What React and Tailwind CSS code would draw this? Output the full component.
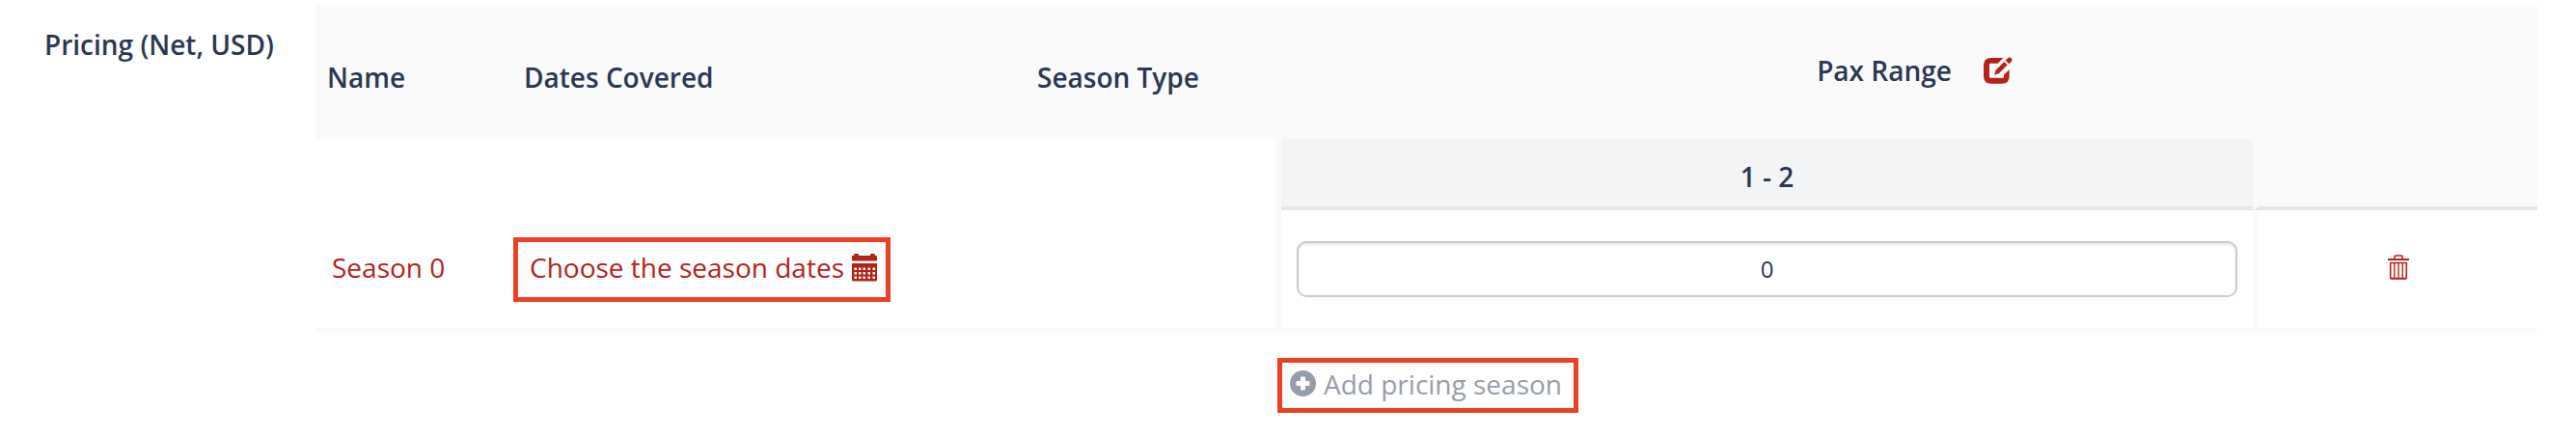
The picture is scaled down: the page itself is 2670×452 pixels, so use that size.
const headers = ['Name', 'Dates Covered', 'Season Type'];

function EditIcon() {
    return (
        <svg viewBox="54 24 96 90" className="h-[30px] w-8" fill="currentColor" aria-hidden="true">
            <path d="M118 30H80Q57 30 57 53V87Q57 110 80 110H114Q137 110 137 87V66L120 83V89Q120 92 117 92H78Q75 92 75 89V50Q75 47 78 47H101Z" />
            <path d="M90 83L95 68L121 42L131 52L105 78Z" />
            <path d="M125 38L131 32Q137 26 143 31Q149 37 142 43L136 49Z" />
        </svg>
    );
}

function CalendarIcon() {
    return (
        <svg viewBox="0 0 27 29" className="h-[29px] w-[27px]" fill="currentColor" aria-hidden="true">
            <path d="M0 3Q0 2 1 2H2V1Q2 0 3 0H6Q7 0 7 1V2H19V1Q19 0 20 0H23Q24 0 24 1V2H25Q26 2 26 3V7.500H0Z" />
            <path
                fillRule="evenodd"
                d="M0 10H26V27Q26 28.500 24.500 28.500H1.500Q0 28.500 0 27ZM2.500 14.500v2.500h2.500v-2.500zM7 14.500v2.500h2.500v-2.500zM11.500 14.500v2.500h2.500v-2.500zM16.500 14.500v2.500h2.500v-2.500zM21.500 14.500v2.500h2.500v-2.500zM2.500 19v2.500h2.500v-2.500zM7 19v2.500h2.500v-2.500zM11.500 19v2.500h2.500v-2.500zM16.500 19v2.500h2.500v-2.500zM21.500 19v2.500h2.500v-2.500zM2.500 23.500v2.500h2.500v-2.500zM7 23.500v2.500h2.500v-2.500zM11.500 23.500v2.500h2.500v-2.500zM16.500 23.500v2.500h2.500v-2.500zM21.500 23.500v2.500h2.500v-2.500z"
            />
        </svg>
    );
}

function TrashIcon() {
    return (
        <svg viewBox="0 0 22 26" className="h-[26px] w-[22px]" fill="none" stroke="currentColor" strokeWidth="1.4" aria-hidden="true">
            <path d="M0 5H22" strokeWidth="2" />
            <path d="M7 4V2Q7 1 8 1H14Q15 1 15 2V4" strokeWidth="1.6" />
            <path d="M2.700 8.500H19.300V24Q19.300 25 18.300 25H3.700Q2.700 25 2.700 24Z" strokeWidth="1.6" />
            <path d="M6.800 9V24M11 9V24M15.200 9V24" />
            <path d="M3 24.500H19" />
        </svg>
    );
}

function PlusIcon() {
    return (
        <svg viewBox="0 0 27 27" className="h-[27px] w-[27px]" aria-hidden="true">
            <circle cx="13.500" cy="13.500" r="13.500" fill="currentColor" />
            <path
                d="M12 6.500H15Q16 6.500 16 7.500V11H19.500Q20.500 11 20.500 12V15Q20.500 16 19.500 16H16V19.500Q16 20.500 15 20.500H12Q11 20.500 11 19.500V16H7.500Q6.500 16 6.500 15V12Q6.500 11 7.500 11H11V7.500Q11 6.500 12 6.500Z"
                fill="#fff"
            />
        </svg>
    );
}

export default function App() {
    return (
        <section className="flex bg-white pr-10 font-['Open_Sans',sans-serif] text-[28px] leading-10 text-[#2b3752]">
            <h2 id="pricing-title" className="w-[328px] shrink-0 pt-[26px] pl-[46px] font-semibold">Pricing (Net, USD)</h2>

            <table aria-labelledby="pricing-title" className="mt-[5px] w-full table-fixed border-separate border-spacing-0">
                <colgroup>
                    <col className="w-[204px]" />
                    <col className="w-[532px]" />
                    <col className="w-[264px]" />
                    <col />
                    <col className="w-[295px]" />
                </colgroup>
                <thead>
                    <tr className="h-[139px] bg-[#fafafa]">
                        {headers.map((h) => (
                            <th key={h} className="px-[11px] pt-2.5 text-left font-semibold">{h}</th>
                        ))}
                        <th colSpan={2} className="pb-1 pl-3 font-semibold">
                            <div className="flex items-center justify-center gap-8">
                                Pax Range
                                <button type="button" aria-label="Edit pax range" className="text-[#b52217]">
                                    <EditIcon />
                                </button>
                            </div>
                        </th>
                    </tr>
                    <tr className="h-[74px]">
                        <th colSpan={3} className="border-r-6 border-[#fafafa]"></th>
                        <th className="border-b-4 border-[#e4e5e6] bg-[#f3f4f6] pt-2 font-semibold">1 - 2</th>
                        <th className="border-b-4 border-l-6 border-b-[#e4e5e6] border-l-[#fafafa] bg-[#fafafa]"></th>
                    </tr>
                </thead>
                <tbody>
                    <tr className="h-[126px] text-[#b52217]">
                        <td className="border-b-4 border-[#fafafa] pb-1 pl-4">
                            <a href="#season-0">Season 0</a>
                        </td>
                        <td className="border-b-4 border-[#fafafa]">
                            <button type="button" className="flex h-[67px] items-center gap-2 border-5 border-[#ec4025] pr-2 pb-1 pl-3">
                                Choose the season dates
                                <CalendarIcon />
                            </button>
                        </td>
                        <td className="border-r-6 border-b-4 border-[#fafafa]"></td>
                        <td className="border-b-4 border-[#fafafa] px-4">
                            <input
                                type="text"
                                aria-label="Net price for 1 - 2 pax"
                                defaultValue="0"
                                className="block h-[58px] w-full rounded-[10px] border-2 border-[#ccc] pb-0.5 text-center text-2xl text-[#2b3752] shadow-[inset_0_2px_2px_rgba(0,0,0,0.075)]"
                            />
                        </td>
                        <td className="border-b-4 border-l-6 border-[#fafafa] pb-1">
                            <button type="button" aria-label="Delete season" className="mx-auto block">
                                <TrashIcon />
                            </button>
                        </td>
                    </tr>
                </tbody>
                <tfoot>
                    <tr>
                        <td colSpan={3}></td>
                        <td className="pt-[27px]">
                            <button type="button" className="-ml-1 flex h-[57px] items-center gap-2 border-5 border-[#ec4025] pr-3 pb-1 pl-2 text-[#969daa]">
                                <PlusIcon />
                                Add pricing season
                            </button>
                        </td>
                        <td></td>
                    </tr>
                </tfoot>
            </table>
        </section>
    );
}
